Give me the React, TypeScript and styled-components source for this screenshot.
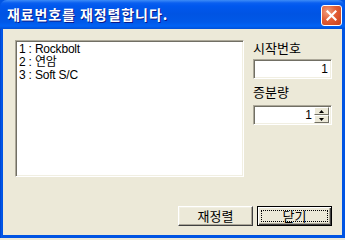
import React from "react";
import styled, { createGlobalStyle } from "styled-components";

const Global = createGlobalStyle`
  html, body { margin: 0; padding: 0; background: #ECE9D8; }
  body { width: 345px; height: 238px; overflow: hidden; }
`;

const FONT = `"Liberation Sans", "Noto Sans CJK KR", sans-serif`;

const Window = styled.div`
  width: 345px;
  height: 238px;
  box-sizing: border-box;
  display: flex;
  flex-direction: column;
  background: #0054e3;
  font-family: ${FONT};
  font-size: 12px;
  color: #000;
`;

const TitleBar = styled.div`
  height: 29px;
  flex: none;
  display: flex;
  align-items: center;
  justify-content: space-between;
  padding: 0 3px 0 7px;
  box-sizing: border-box;
  background: linear-gradient(
    to bottom,
    #3d8cf7 0px,
    #0a5ff0 3px,
    #0058ee 6px,
    #0054e3 14px,
    #0058e8 22px,
    #0062f5 26px,
    #0050d8 29px
  );
  border-radius: 7px 7px 0 0;
`;

const Title = styled.span`
  color: #fff;
  font-weight: bold;
  font-size: 14px;
  letter-spacing: 0.9px;
  text-shadow: 1px 1px 0 #0a1a8a;
  font-family: "Noto Sans CJK KR", sans-serif;
  line-height: 16px;
  padding-bottom: 1px;
`;

const CloseBtn = styled.div`
  width: 21px;
  height: 21px;
  margin-top: 2px;
  box-sizing: border-box;
  border: 1px solid #fff;
  border-radius: 3px;
  background: radial-gradient(circle at 30% 30%, #f0a080 0%, #e35e36 45%, #c8401b 100%);
  display: flex;
  align-items: center;
  justify-content: center;
`;

const Frame = styled.div`
  flex: 1;
  display: flex;
  padding: 0 3px 3px 3px;
  background: linear-gradient(to right, #0037b8, #0058ee 1px, #0054e3 2px);
`;

const Client = styled.div`
  flex: 1;
  background: #ece9d8;
  display: flex;
  flex-direction: column;
  padding: 11px 10px 0 12px;
`;

const TopRow = styled.div`
  display: flex;
  gap: 9px;
`;

const ListBox = styled.div`
  width: 229px;
  height: 137px;
  box-sizing: border-box;
  background: #fff;
  border-top: 1px solid #aca899;
  border-left: 1px solid #aca899;
  border-right: 1px solid #fff;
  border-bottom: 1px solid #fff;
  box-shadow: inset 1px 1px 0 #716f64, inset -1px -1px 0 #f1efe2;
  padding: 2px 3px;
`;

const ListItem = styled.div`
  height: 13px;
  line-height: 13px;
  white-space: nowrap;
  font-size: 12px;
  letter-spacing: -0.2px;
`;

const Side = styled.div`
  width: 79px;
  display: flex;
  flex-direction: column;
`;

const Label = styled.div<{ $top: number }>`
  margin-top: ${(p) => p.$top}px;
  height: 14px;
  line-height: 14px;
  font-size: 13px;
  font-family: "Noto Sans CJK KR", sans-serif;
`;

const Edit = styled.div<{ $top: number }>`
  margin-top: ${(p) => p.$top}px;
  height: 20px;
  box-sizing: border-box;
  background: #fff;
  border-top: 1px solid #aca899;
  border-left: 1px solid #aca899;
  border-right: 1px solid #fff;
  border-bottom: 1px solid #fff;
  box-shadow: inset 1px 1px 0 #716f64, inset -1px -1px 0 #f1efe2;
  display: flex;
  align-items: center;
  justify-content: flex-end;
  padding: 0 2px 0 4px;
`;

const EditText = styled.span<{ $pad: number }>`
  line-height: 16px;
  padding-right: ${(p) => p.$pad}px;
`;

const Spinner = styled.div`
  width: 15px;
  height: 16px;
  display: flex;
  flex-direction: column;
`;

const SpinBtn = styled.div`
  flex: 1;
  background: #ece9d8;
  box-sizing: border-box;
  border-top: 1px solid #fff;
  border-left: 1px solid #fff;
  border-right: 1px solid #716f64;
  border-bottom: 1px solid #716f64;
  display: flex;
  align-items: center;
  justify-content: center;
`;

const Bottom = styled.div`
  display: flex;
  justify-content: flex-end;
  gap: 4px;
  margin-top: 29px;
`;

const Button = styled.div<{ $default?: boolean }>`
  width: 75px;
  height: 20px;
  box-sizing: border-box;
  background: #ece9d8;
  display: flex;
  align-items: center;
  justify-content: center;
  font-family: "Noto Sans CJK KR", sans-serif;
  font-size: 13px;
  position: relative;
  border: 1px solid ${(p) => (p.$default ? "#000" : "transparent")};
  box-shadow: ${(p) =>
    p.$default
      ? "inset 1px 1px 0 #fff, inset -1px -1px 0 #404040, inset -2px -2px 0 #aca899"
      : "inset 0 0 0 0 transparent"};
  ${(p) =>
    p.$default
      ? ""
      : `border-top-color:#fff;border-left-color:#fff;border-right-color:#404040;border-bottom-color:#404040;
         box-shadow: inset -1px -1px 0 #aca899, inset 1px 1px 0 #f1efe2;`}
`;

const Focus = styled.div`
  position: absolute;
  inset: 3px;
  border: 1px dotted #000;
`;

const BtnText = styled.span`
  line-height: 14px;
  position: relative;
`;

export default function App() {
  return (
    <>
      <Global />
      <Window>
        <TitleBar>
          <Title>재료번호를 재정렬합니다.</Title>
          <CloseBtn>
            <svg width="11" height="11" viewBox="0 0 11 11">
              <path d="M1.5 1.5 L9.5 9.5 M9.5 1.5 L1.5 9.5" stroke="#fff" strokeWidth="2.2" strokeLinecap="square" />
            </svg>
          </CloseBtn>
        </TitleBar>
        <Frame>
          <Client>
            <TopRow>
              <ListBox>
                <ListItem>1 : Rockbolt</ListItem>
                <ListItem>2 : 연암</ListItem>
                <ListItem>3 : Soft S/C</ListItem>
              </ListBox>
              <Side>
                <Label $top={1}>시작번호</Label>
                <Edit $top={4}>
                  <EditText $pad={1}>1</EditText>
                </Edit>
                <Label $top={6}>증분량</Label>
                <Edit $top={6}>
                  <EditText $pad={2}>1</EditText>
                  <Spinner>
                    <SpinBtn>
                      <svg width="5" height="3" viewBox="0 0 5 3"><path d="M0 3 L2.5 0 L5 3 Z" fill="#000" /></svg>
                    </SpinBtn>
                    <SpinBtn>
                      <svg width="5" height="3" viewBox="0 0 5 3"><path d="M0 0 L5 0 L2.5 3 Z" fill="#000" /></svg>
                    </SpinBtn>
                  </Spinner>
                </Edit>
              </Side>
            </TopRow>
            <Bottom>
              <Button>
                <BtnText>재정렬</BtnText>
              </Button>
              <Button $default>
                <Focus />
                <BtnText>닫기</BtnText>
              </Button>
            </Bottom>
          </Client>
        </Frame>
      </Window>
    </>
  );
}
